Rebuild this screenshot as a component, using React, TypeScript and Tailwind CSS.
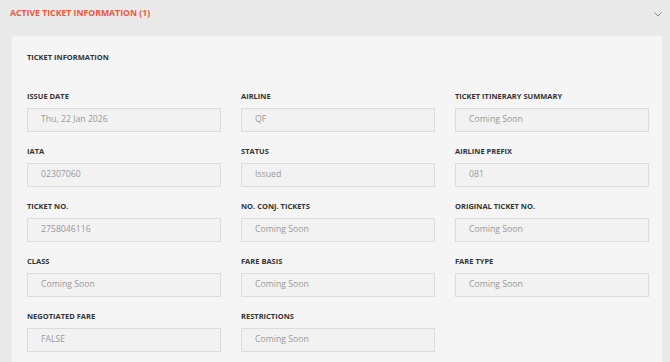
import React from "react";

const rows: [string, string][][] = [
  [["ISSUE DATE", "Thu, 22 Jan 2026"], ["AIRLINE", "QF"], ["TICKET ITINERARY SUMMARY", "Coming Soon"]],
  [["IATA", "02307060"], ["STATUS", "Issued"], ["AIRLINE PREFIX", "081"]],
  [["TICKET NO.", "2758046116"], ["NO. CONJ. TICKETS", "Coming Soon"], ["ORIGINAL TICKET NO.", "Coming Soon"]],
  [["CLASS", "Coming Soon"], ["FARE BASIS", "Coming Soon"], ["FARE TYPE", "Coming Soon"]],
  [["NEGOTIATED FARE", "FALSE"], ["RESTRICTIONS", "Coming Soon"]],
];

function Field({ label, value }: { label: string; value: string }) {
  return (
    <div className="flex flex-col">
      <div className="text-[7.5px] font-bold text-[#333] leading-[11px] h-[11px]">{label}</div>
      <div className="mt-[6px] h-[24px] w-[194px] border border-[#dcdcdc] bg-[#f2f2f2] flex items-center pl-[13px] text-[8.7px] text-[#999]">
        {value}
      </div>
    </div>
  );
}

export default function App() {
  return (
    <div
      className="w-[670px] h-[362px] overflow-hidden bg-[#e9e9e9]"
      style={{ fontFamily: '"Open Sans", sans-serif' }}
    >
      <div className="flex items-center justify-between h-[27px] pl-[10px] pr-[8px]">
        <div className="text-[8.7px] font-bold text-[#f0553c]">ACTIVE TICKET INFORMATION (1)</div>
        <svg width="8" height="5" viewBox="0 0 8 5" className="mt-[2px]">
          <path d="M0.5 0.5 L4 4 L7.5 0.5" fill="none" stroke="#888" strokeWidth="1" />
        </svg>
      </div>
      <div className="ml-[11px] mt-[8px] w-[651px] bg-[#f5f5f5] pl-[15px] pt-[16px] pb-[20px] border-l border-t border-[#ededed]">
        <div className="text-[7.5px] font-bold text-[#333] leading-[11px]">TICKET INFORMATION</div>
        <div className="mt-[28px] flex flex-col gap-[14px]">
          {rows.map((row, i) => (
            <div key={i} className="flex gap-[20px]">
              {row.map(([l, v]) => (
                <Field key={l} label={l} value={v} />
              ))}
            </div>
          ))}
        </div>
      </div>
    </div>
  );
}
